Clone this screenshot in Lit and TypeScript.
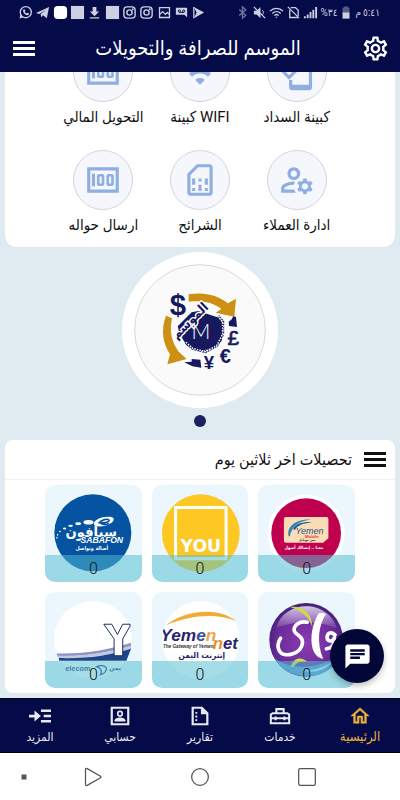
import { LitElement, html, svg, css } from "lit";
import { customElement, state } from "lit/decorators.js";
import { classMap } from "lit/directives/class-map.js";

const icon = (body: unknown, cls = "", box = "0 0 24 24") =>
  html`<svg class="ic ${cls}" viewBox=${box} aria-hidden="true">${body}</svg>`;

/* ---- interface icons ---- */
const gear = svg`<path d="M19.43 12.98c.04-.32.07-.64.07-.98s-.03-.66-.07-.98l2.11-1.65c.19-.15.24-.42.12-.64l-2-3.46c-.09-.16-.26-.25-.44-.25-.06 0-.12.01-.17.03l-2.49 1c-.52-.4-1.08-.73-1.69-.98l-.38-2.65C14.46 2.18 14.25 2 14 2h-4c-.25 0-.46.18-.49.42l-.38 2.65c-.61.25-1.17.59-1.69.98l-2.49-1c-.06-.02-.12-.03-.18-.03-.17 0-.34.09-.43.25l-2 3.46c-.13.22-.07.49.12.64l2.11 1.65c-.04.32-.07.65-.07.98s.03.66.07.98l-2.11 1.65c-.19.15-.24.42-.12.64l2 3.46c.09.16.26.25.44.25.06 0 .12-.01.17-.03l2.49-1c.52.4 1.08.73 1.69.98l.38 2.65c.03.24.24.42.49.42h4c.25 0 .46-.18.49-.42l.38-2.65c.61-.25 1.17-.59 1.69-.98l2.49 1c.06.02.12.03.18.03.17 0 .34-.09.43-.25l2-3.46c.12-.22.07-.49-.12-.64l-2.11-1.65zm-1.98-1.71c.04.31.05.52.05.73 0 .21-.02.43-.05.73l-.14 1.13.89.7 1.08.84-.7 1.21-1.27-.51-1.04-.42-.9.68c-.43.32-.84.56-1.25.73l-1.06.43-.16 1.13-.2 1.35h-1.4l-.19-1.35-.16-1.13-1.06-.43c-.43-.18-.83-.41-1.23-.71l-.91-.7-1.06.43-1.27.51-.7-1.21 1.08-.84.89-.7-.14-1.13c-.03-.31-.05-.54-.05-.74s.02-.43.05-.73l.14-1.13-.89-.7-1.08-.84.7-1.21 1.27.51 1.04.42.9-.68c.43-.32.84-.56 1.25-.73l1.06-.43.16-1.13.2-1.35h1.39l.19 1.35.16 1.13 1.06.43c.43.18.83.41 1.23.71l.91.7 1.06-.43 1.27-.51.7 1.21-1.07.85-.89.7.14 1.13zM12 8c-2.21 0-4 1.79-4 4s1.79 4 4 4 4-1.79 4-4-1.79-4-4-4zm0 6c-1.1 0-2-.9-2-2s.9-2 2-2 2 .9 2 2-.9 2-2 2z"/>`;
const burger = svg`<path d="M0 0h22v3H0zM0 6h22v3H0zM0 12h22v3H0z"/>`;
const wifi = svg`<path d="M1 9l2 2c4.97-4.97 13.03-4.97 18 0l2-2C16.93 2.93 7.08 2.93 1 9zm8 8l3 3 3-3c-1.65-1.66-4.34-1.66-6 0zm-4-4l2 2c2.76-2.76 7.24-2.76 10 0l2-2C15.14 9.14 8.87 9.14 5 13z"/>`;
const phoneCheck = svg`<path d="M7 17v4.500a2 2 0 0 0 2 2h10.500a2 2 0 0 0 2-2V2.500a2 2 0 0 0-2-2H9a2 2 0 0 0-2 2V6h2V4h10.500v16H9v-3z"/><path d="M3 11.500l4 4 8-8" fill="none" stroke="currentColor" stroke-width="2"/>`;
const money = svg`<path fill="none" stroke="currentColor" stroke-width="2" d="M3 5h18v14H3z"/><rect x="5" y="8" width="2" height="8"/><rect x="9" y="9" width="3" height="6" rx=".4" fill="none" stroke="currentColor" stroke-width="1.700"/><rect x="15" y="9" width="3" height="6" rx=".4" fill="none" stroke="currentColor" stroke-width="1.700"/>`;
const manage = svg`<path d="M4 18v-.65c0-.34.16-.66.41-.81C6.1 15.53 8.03 15 10 15c.03 0 .05 0 .08.01.1-.7.3-1.37.59-1.98-.22-.02-.44-.03-.67-.03-2.42 0-4.68.67-6.61 1.82-.88.52-1.39 1.5-1.39 2.53V20h9.26c-.42-.6-.75-1.28-.97-2H4zM10 12c2.21 0 4-1.79 4-4s-1.79-4-4-4-4 1.79-4 4 1.79 4 4 4zm0-6c1.1 0 2 .9 2 2s-.9 2-2 2-2-.9-2-2 .9-2 2-2zM20.75 16c0-.22-.03-.42-.06-.63l1.14-1.01-1-1.73-1.45.49c-.32-.27-.68-.48-1.08-.63L18 11h-2l-.3 1.49c-.4.15-.76.36-1.08.63l-1.45-.49-1 1.73 1.14 1.01c-.03.21-.06.41-.06.63s.03.42.06.63l-1.14 1.01 1 1.73 1.45-.49c.32.27.68.48 1.08.63L16 21h2l.3-1.49c.4-.15.76-.36 1.08-.63l1.45.49 1-1.73-1.14-1.01c.03-.21.06-.41.06-.63zM17 18c-1.1 0-2-.9-2-2s.9-2 2-2 2 .9 2 2-.9 2-2 2z"/>`;
const sim = svg`<path fill-rule="evenodd" d="M18 2h-8L4 8v12c0 1.100.9 2 2 2h12c1.100 0 2-.9 2-2V4c0-1.100-.9-2-2-2zm0 2v16H6V8.830L10.830 4H18z"/><path d="M7 17h2v2H7zM15 17h2v2h-2zM7 11h2v4H7zM11 15h2v4h-2zM11 11h2v2h-2zM15 11h2v4h-2z"/>`;
const chat = svg`<path d="M20 2H4c-1.100 0-2 .9-2 2v18l4-4h14c1.100 0 2-.9 2-2V4c0-1.100-.9-2-2-2zM6 9h12v2H6V9zm8 5H6v-2h8v2zm4-6H6V6h12v2z"/>`;
const home = svg`<path d="M12 5.690l5 4.500V18h-2v-6H9v6H7v-7.810l5-4.500M12 3L2 12h3v8h6v-6h2v6h6v-8h3L12 3z" stroke="currentColor" stroke-width=".5"/>`;
const toolbox = svg`<g fill="none" stroke="currentColor" stroke-width="2.200"><path d="M2 10.500L4 9h16l2 1.500V20H2z"/><path d="M8 9V4.500h8V9M2 14.500h20"/></g><path d="M6 12.500h2.500v4H6zM15.500 12.500H18v4h-2.500z"/>`;
const report = svg`<path d="M4 3h10l6 6v12H4z" fill="none" stroke="currentColor" stroke-width="2.400"/><path d="M13 3v7h7zM7 7.500h2v2H7zM7 11.500h2v2H7zM7 15.500h2v2H7z"/>`;
const account = svg`<path d="M3 3h18v18H3z" fill="none" stroke="currentColor" stroke-width="2.400"/><circle cx="12" cy="9.500" r="2.500" fill="none" stroke="currentColor" stroke-width="1.800"/><path d="M6 18v-1c0-2.300 3.500-3.500 6-3.500s6 1.200 6 3.500v1z"/>`;
const more = svg`<path d="M0 10.500h6V6l7 6-7 6v-4.500H0zM13 5h11v2.600H13zM16 10.700h8v2.600h-8zM13 16.400h11V19H13z"/>`;

/* ---- status bar icons ---- */
const line = (d: string) => svg`<path d=${d} fill="none" stroke="currentColor" stroke-width="1.400"/>`;
const insta = svg`<rect x="2" y="2" width="12" height="12" rx="3.500" fill="none" stroke="currentColor" stroke-width="1.500"/><circle cx="8" cy="8" r="2.800" fill="none" stroke="currentColor" stroke-width="1.500"/><circle cx="11.500" cy="4.500" r="1"/>`;
const leftStatus = [
  svg`<circle cx="8.300" cy="7.700" r="5.900" fill="none" stroke="currentColor" stroke-width="1.400"/><path d="M1.500 14.500l1.200-4 2.800 2.800zM5.500 5l1.500-.6.900 1.900-.7.900c.5.900 1 1.400 1.900 1.800l.8-.8 1.900.9c0 1.300-1 1.900-2 1.800C7.500 10.500 5 8 5.500 5z"/>`,
  svg`<path d="M1 8.500L15 2l-2.400 12-4-3-2 2-.6-3.500L12 5 4.500 9.600z"/>`,
  svg`<rect x="1" y="1" width="14" height="14" rx="4" fill="#fff"/>`,
  svg`<path d="M1 1h14v14H1z"/>`,
  svg`<path d="M6 2h4v5h3l-5 5-5-5h3zM3 13h10v1.500H3z"/>`,
  svg`<path d="M1 1h14v14H1z"/>`,
  insta,
  insta,
  svg`${line("M2.700 2.700h10.600v10.600H2.700z")}${line("M3 10l3-3 3 3 2-2 2 2")}`,
  svg`<path d="M2 3h12v10l-3-2.500H2z"/><g fill="none" stroke="#050b48"><circle cx="5.700" cy="6.500" r="1.200"/><circle cx="10.300" cy="6.500" r="1.200"/><path d="M5.700 7.900h4.600"/></g>`,
  svg`<path d="M3 2l11 6-11 6 3-6z"/>${line("M3 2v12")}`,
];
const rightStatus = [
  svg`<g opacity=".55">${line("M4.500 4.800l7 6.200L8 14V2l3.500 3-7 6.200")}</g>`,
  svg`<path d="M2 6h3l4-4v12l-4-4H2z"/><path d="M11 5.500c1.500 1 1.500 4 0 5" fill="none" stroke="currentColor"/>${line("M2 2l12 12")}`,
  svg`${line("M1 6.500c4-4 10-4 14 0")}${line("M3.500 9c2.600-2.600 6.400-2.600 9 0")}${line("M5.800 11.300c1.300-1.300 3.100-1.300 4.400 0")}<path d="M7 12.500h2L8 14z"/>`,
  svg`${line("M4 5v8.300h8.500M5 2.700h5l3 3V12")}${line("M2 2l12 12")}`,
  svg`<path d="M1 12h2v2H1zM4 10h2v4H4zM7 7.500h2V14H7zM10 5h2v9h-2zM13 2h2v12h-2z"/>`,
];
const battery = svg`<path opacity=".4" d="M5.500 1h5v1.500H12V9H4V2.500h1.500z"/><path d="M4 8h8v7H4z"/>`;

/* ---- brand artwork ---- */
const brand = svg`
  <circle cx="270" cy="255" r="196" fill="#fafafa" stroke="#d8d8da" stroke-width="3"/>
  <path d="M236 148c45-8 88 2 118 27l24-14-5 54-56-12 17-11c-25-20-58-26-98-22z" fill="#cd9013"/>
  <path d="M168 212l18 8c-8 38-2 70 20 100l24 22-58 16 8-30c-22-34-28-74-12-116z" fill="#cd9013"/>
  <path d="M203 244l42-42 20-4 62 20 12 24-4 46-24 22-44 8-36-16-22-34z" fill="#17195f"/>
  <path d="M228 292l20 18 38 10 34-18 18-34 0-38-14-16" fill="none" stroke="#17195f" stroke-width="9" stroke-dasharray="6 2"/>
  <path d="M228 292l20 18 38 10 34-18 18-34 0-38-14-16" fill="none" stroke="#fff" stroke-width="5" stroke-dasharray="4 4"/>
  <path d="M356 230l8-6 6-10 8 2 3 30-24-3zM223 352l22-2 0-8 26 2 3 24-27-4z" fill="#17195f"/>
  <text class="ar" x="240" y="240" font-size="40" font-weight="700" text-anchor="middle" fill="#17195f" stroke="#fff" stroke-width="8" paint-order="stroke" transform="rotate(-44 240 228)">الموسم</text>
  <text class="thin" x="273" y="281" font-size="62" text-anchor="middle" fill="#fff">M</text>
  <g class="lat" fill="#17195f" font-weight="700" text-anchor="middle">
    <text x="204" y="209" font-size="88">$</text>
    <text x="370" y="299" font-size="62" font-weight="400" stroke="#17195f" stroke-width="2">£</text>
    <text x="346" y="355" font-size="60">€</text>
    <text x="297" y="372" font-size="56">¥</text>
  </g>`;

const tiles = [
  {
    name: "Yemen Mobile",
    box: "174 150 291 291",
    art: svg`<circle cx="319" cy="295" r="116" fill="#fff"/><circle cx="319" cy="295" r="105" fill="#bf004f"/>
      <path d="M258 246h122q6 0 6 6v58l-16 14H258q-6 0-6-6v-66q0-6 6-6z" fill="#fbdcb4"/>
      <path d="M266 304c-6-30 22-52 68-50-36 4-58 20-64 50z" fill="#2f86b8"/><path d="M280 282c6-14 28-22 56-20-24 3-42 8-52 24z" fill="#1a5f9a"/>
      <text class="lat" x="329" y="298" font-size="27" font-style="italic" text-anchor="middle" fill="#254f86">Yemen</text>
      <text class="lat" x="336" y="309" font-size="13" font-weight="700" text-anchor="middle" fill="#d13b4c">Mobile</text>
      <text class="ar" x="322" y="320" font-size="10" font-weight="700" text-anchor="middle" fill="#333">يمن موبايل</text>
      <text class="ar" x="312" y="343" font-size="13" font-weight="700" text-anchor="middle" fill="#fff">معنا .. إتصالك أسهل</text>`,
  },
  {
    name: "YOU",
    box: "453 150 291 291",
    art: svg`<circle cx="600" cy="295" r="117" fill="#fdc823"/><path d="M524 218h152v154H524z" fill="none" stroke="#fff" stroke-width="9"/>
      <text class="round" x="600" y="351" font-size="52" font-weight="700" text-anchor="middle" fill="#fff">YOU</text>`,
  },
  {
    name: "Sabafon",
    box: "135 150 291 291",
    art: svg`<circle cx="279" cy="294" r="116" fill="#0553a1"/>
      <g fill="#fff"><ellipse cx="266" cy="262" rx="15" ry="7"/><ellipse cx="235" cy="267" rx="9" ry="4.500"/><ellipse cx="212" cy="273" rx="7" ry="3.500"/><ellipse cx="194" cy="281" rx="5" ry="3"/><ellipse cx="180" cy="290" rx="3" ry="2.500"/><ellipse cx="173" cy="300" rx="2" ry="3"/><ellipse cx="171" cy="309" rx="2" ry="3"/>
      <ellipse cx="312" cy="260" rx="31" ry="13" transform="rotate(-14 312 260)"/></g>
      <path d="M296 266c8-12 28-16 32-10 0 6-16 8-26 8 4 6 16 5 26 2" fill="none" stroke="#0553a1" stroke-width="5"/>
      <text class="ar" x="274" y="306" font-size="44" font-weight="700" text-anchor="middle" fill="#fff">سبأفون</text>
      <text class="lat" x="306" y="324" font-size="26" font-weight="700" font-style="italic" text-anchor="middle" fill="#fff" stroke="#0553a1" stroke-width="4" paint-order="stroke">SABAFON</text>
      <text class="ar" x="276" y="347" font-size="16" font-weight="700" text-anchor="middle" fill="#fff">أصالة وتواصل</text>`,
  },
  {
    name: "واي",
    box: "174 21 291 291",
    art: svg`<defs><radialGradient id="way" cx=".5" cy=".55" r=".55"><stop offset="0" stop-color="#8a3bb0"/><stop offset=".7" stop-color="#6e2c9c"/><stop offset="1" stop-color="#43207c"/></radialGradient>
      <linearGradient id="gloss" x1="0" y1="0" x2="0" y2="1"><stop offset="0" stop-color="#fff" stop-opacity=".75"/><stop offset="1" stop-color="#fff" stop-opacity=".1"/></linearGradient></defs>
      <circle cx="319" cy="165" r="111" fill="url(#way)"/>
      <path d="M228 130c12-42 50-66 91-66s80 24 92 66c-50-22-130-24-183 0z" fill="url(#gloss)"/>
      <path d="M270 66c40-4 66 18 68 62-10-32-30-50-68-62z" fill="#cfd84a"/>
      <path d="M224 220c40 34 130 40 198-14-16 48-58 70-104 68-42-2-78-22-94-54z" fill="#5f8fd0"/>
      <path d="M300 256c40 4 80-10 104-32-20 30-60 46-104 32z" fill="#bfe4f4"/>
      <path d="M272 246c10-30 36-30 50-14-18-4-34 2-40 14z" fill="#d6dc4a"/>
      <g fill="none" stroke="#fff" stroke-linecap="round"><path d="M322 112c-26-6-44 14-38 28 6 12 26 14 24 34-4 34-56 48-70 24-6-12-4-26 4-38" stroke-width="11"/><path d="M406 150c-14-12-24-4-24 8s16 14 20 4M404 158c2 22-8 32-24 34" stroke-width="11"/></g>
      <path d="M356 86c8-4 18-2 22 2-22 34-28 84-8 134-14-2-26-12-32-32-8-34 0-72 18-104z" fill="#fff"/>`,
  },
  {
    name: "Yemen Net",
    box: "453 21 291 291",
    art: svg`<circle cx="600" cy="165" r="117" fill="#fff"/>
      <path d="M494 122c60-50 160-56 212-14-60-24-140-18-212 14z" fill="#f1ac33"/>
      <clipPath id="net"><circle cx="600" cy="165" r="117"/></clipPath>
      <g clip-path="url(#net)"><text class="lat" x="478" y="168" font-size="52" font-weight="700" font-style="italic" fill="#2b2370">Yem<tspan fill="#3a50a0">e</tspan><tspan fill="#f0a24c">n</tspan></text>
      <text class="lat" x="636" y="192" font-size="50" font-weight="700" font-style="italic" fill="#2b2370"><tspan fill="#e8912e">n</tspan>et</text>
      <text class="lat" x="486" y="190" font-size="14" font-style="italic" font-weight="700" fill="#333">The Gateway of Yemen</text></g>
      <text class="ar" x="603" y="220" font-size="25" font-weight="700" text-anchor="middle" fill="#2b2370">إنترنت اليمن</text>`,
  },
  {
    name: "Yemen Telecom",
    box: "135 21 291 291",
    art: svg`<circle cx="279" cy="165" r="117" fill="#fff"/>
      <path d="M170 206c90 2 160-12 224-32v10c-70 20-140 30-221 32z" fill="#8d94c4"/>
      <path d="M173 212c90 4 160-10 221-30v12c-70 20-140 26-218 26z" fill="#c3c8e2"/>
      <path d="M176 220c80 2 150-6 218-28l-14 36H178z" fill="#1d4588"/>
      <path d="M312 118h24l17 31 16-31h22v6l-22 38v51h-26v-51z" fill="#fff" stroke="#1b2c66" stroke-width="3"/>
      <text class="lat" x="196" y="259" font-size="22" font-weight="700" fill="#1d3f7a">elecom</text>
      <path d="M290 246c10-6 26-4 30 4 0 10-8 18-18 20 6-10 2-20-12-24z" fill="none" stroke="#1d3f7a" stroke-width="4"/>
      <text class="ar" x="346" y="257" font-size="20" font-weight="700" text-anchor="middle" fill="#1d3f7a">يمن</text>`,
  },
];

const services = [
  { label: "كبينة السداد", glyph: phoneCheck },
  { label: "WIFI كبينة", glyph: wifi },
  { label: "التحويل المالي", glyph: money },
  { label: "ادارة العملاء", glyph: manage },
  { label: "الشرائح", glyph: sim },
  { label: "ارسال حواله", glyph: money },
];

const tabs = [
  { label: "الرئيسية", glyph: home },
  { label: "خدمات", glyph: toolbox },
  { label: "تقارير", glyph: report },
  { label: "حسابي", glyph: account },
  { label: "المزيد", glyph: more },
];

@customElement("app-root")
export class AppRoot extends LitElement {
  @state() private active = 0;

  static styles = css`
    :host {
      display: flex;
      flex-direction: column;
      min-height: 100vh;
      background: #e0ebf1;
      color: #111;
      font-family: Roboto, "DejaVu Sans Condensed", "DejaVu Sans", sans-serif;
      font-size: 15px;
    }
    * { box-sizing: border-box; }
    button {
      margin: 0;
      padding: 0;
      border: 0;
      background: none;
      color: inherit;
      font: inherit;
      cursor: pointer;
    }
    .ic { display: block; width: 24px; height: 24px; fill: currentColor; }
    .status {
      display: flex;
      justify-content: space-between;
      align-items: center;
      height: 24px;
      padding: 0 20px 0 18px;
      background: #050b48;
      color: #cdcfe2;
      font-size: 10px;
    }
    .notices { display: flex; justify-content: space-between; width: 52%; }
    .signals { display: flex; align-items: center; gap: 2px; }
    .status .ic { width: 15px; height: 15px; }
    .status .battery { width: 14px; }
    .top {
      display: flex;
      align-items: center;
      justify-content: space-between;
      height: 48px;
      padding: 0 10px 0 13px;
      background: #050b48;
      color: #fff;
    }
    .top h1 { margin: 0; font-size: 20px; font-weight: 400; line-height: 24px; }
    .top .ic { width: 29px; height: 29px; }
    .top .burger, .card .burger { width: 22px; height: 15px; }
    main { position: relative; flex: 1; overflow: hidden; padding: 0 5px 4px; }
    .services {
      display: grid;
      grid-template-columns: repeat(3, 1fr);
      row-gap: 21px;
      margin-top: -40px;
      padding: 10px 50px;
      border-radius: 0 0 12px 12px;
      background: #fff;
    }
    .service { display: flex; flex-direction: column; align-items: center; gap: 3px; line-height: 24px; white-space: nowrap; }
    .disc {
      display: grid;
      place-items: center;
      width: 60px;
      height: 60px;
      border: 1px solid #d4d5da;
      border-radius: 50%;
      background: #f5f7fc;
      color: #8fafe2;
    }
    .disc .ic { width: 38px; height: 38px; }
    .slider { display: flex; flex-direction: column; align-items: center; gap: 7px; padding: 5px 0 13px; }
    .brand { display: block; width: 156px; height: 156px; border-radius: 50%; background: #fff; }
    .dot { width: 12px; height: 12px; border-radius: 50%; background: #1a2060; }
    .card { border-radius: 8px; background: #fff; }
    .card header {
      display: flex;
      align-items: center;
      gap: 12px;
      height: 40px;
      padding: 0 9px;
      border-bottom: 1px solid #f0f2f4;
    }
    .card h2 { margin: 0; font-size: 16px; font-weight: 400; line-height: 24px; }
    .tiles { display: grid; grid-template-columns: repeat(3, 1fr); gap: 10px; padding: 5px 40px; }
    .tile {
      display: grid;
      position: relative;
      aspect-ratio: 1;
      overflow: hidden;
      border-radius: 10px;
      background: #ebf7fd;
    }
    .tile svg { display: block; width: 100%; height: 100%; direction: ltr; }
    .count {
      position: absolute;
      inset: auto 0 0;
      height: 27px;
      background: rgba(82, 189, 209, 0.52);
      color: #111;
      font-size: 16px;
      font-weight: 300;
      line-height: 27px;
      text-align: center;
    }
    .fab {
      display: grid;
      position: absolute;
      right: 16px;
      bottom: 15px;
      place-items: center;
      width: 54px;
      height: 54px;
      border-radius: 50%;
      background: #030738;
      color: #fff;
      box-shadow: 0 3px 6px rgba(0, 0, 0, 0.25);
    }
    .fab .ic { width: 29px; height: 29px; }
    .tabs {
      display: grid;
      grid-template-columns: repeat(5, 1fr);
      height: 55px;
      border-block: 1px solid #000;
      background: #050b48;
      color: #e8e9f2;
      font-size: 12px;
    }
    .tab { display: flex; flex-direction: column; align-items: center; justify-content: center; line-height: 20px; }
    .tab .ic { width: 22px; height: 22px; }
    .tab.on { color: #e9b13c; font-size: 13px; }
    .system {
      display: grid;
      grid-template-columns: 32px repeat(3, 1fr);
      align-items: center;
      justify-items: center;
      height: 47px;
      padding: 0 40px 0 8px;
      background: #fff;
      color: #555;
    }
    .system .ic { width: 20px; height: 20px; }
    .lat { font-family: "Liberation Sans", sans-serif; }
    .thin { font-family: Lato, sans-serif; font-weight: 300; }
    .round { font-family: "DejaVu Sans", sans-serif; }
    .ar { font-family: "DejaVu Sans Condensed", "DejaVu Sans", sans-serif; }
  `;

  render() {
    return html`
      <div class="status" dir="ltr">
        <div class="notices">${leftStatus.map((g) => icon(g, "", "0 0 16 16"))}</div>
        <div class="signals">
          ${rightStatus.map((g) => icon(g, "", "0 0 16 16"))}
          <span>%٣٤</span>
          ${icon(battery, "battery", "0 0 16 16")}
          <span>م</span><span>٥:٤١</span>
        </div>
      </div>
      <header class="top" dir="rtl">
        <button aria-label="الإعدادات">${icon(gear)}</button>
        <h1>الموسم للصرافة والتحويلات</h1>
        <button aria-label="القائمة">${icon(burger, "burger", "0 0 22 15")}</button>
      </header>
      <main dir="rtl">
        <section class="services">
          ${services.map(
            (s) => html`<button class="service"><span class="disc">${icon(s.glyph)}</span><span>${s.label}</span></button>`
          )}
        </section>
        <section class="slider">
          <svg class="brand" viewBox="36 21 468 468" role="img" aria-label="الموسم">${brand}</svg>
          <span class="dot"></span>
        </section>
        <section class="card">
          <header>
            <button aria-label="القائمة">${icon(burger, "burger", "0 0 22 15")}</button>
            <h2>تحصيلات اخر ثلاثين يوم</h2>
          </header>
          <div class="tiles">
            ${tiles.map(
              (t) => html`<button class="tile" aria-label=${t.name}>
                <svg viewBox=${t.box} aria-hidden="true">${t.art}</svg><span class="count">0</span>
              </button>`
            )}
          </div>
        </section>
        <button class="fab" aria-label="محادثة">${icon(chat)}</button>
      </main>
      <nav class="tabs" dir="rtl">
        ${tabs.map(
          (t, i) => html`<button
            class=${classMap({ tab: true, on: i === this.active })}
            @click=${() => (this.active = i)}
          >${icon(t.glyph)}<span>${t.label}</span></button>`
        )}
      </nav>
      <div class="system" dir="ltr">
        <button aria-label="تثبيت">${icon(svg`<path d="M9 9h6v6H9z"/>`)}</button>
        <button aria-label="رجوع">${icon(svg`<path d="M3 3q0-2 2-1l16 9q1 1 0 2L5 22q-2 1-2-1z" fill="none" stroke="currentColor" stroke-width="1.500"/>`)}</button>
        <button aria-label="الشاشة الرئيسية">${icon(svg`<circle cx="12" cy="12" r="10" fill="none" stroke="currentColor" stroke-width="1.500"/>`)}</button>
        <button aria-label="التطبيقات">${icon(svg`<rect x="2" y="2" width="20" height="20" rx="2" fill="none" stroke="currentColor" stroke-width="1.500"/>`)}</button>
      </div>
    `;
  }
}
